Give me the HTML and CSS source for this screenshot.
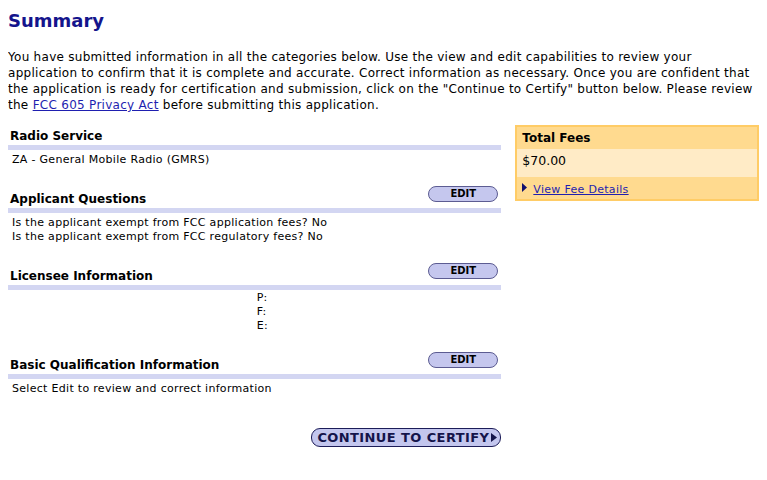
FILE: index.html
```html
<!DOCTYPE html>
<html>
<head>
<title>Summary</title>
<link rel="stylesheet" href="styles.css">
</head>
<body>

<h1 class="title">Summary</h1>

<p class="intro">
You have submitted information in all the categories below. Use the view and edit capabilities to review your<br>
application to confirm that it is complete and accurate. Correct information as necessary. Once you are confident that<br>
the application is ready for certification and submission, click on the "Continue to Certify" button below. Please review<br>
the <a href="#" class="link">FCC 605 Privacy Act</a> before submitting this application.
</p>

<div class="main">
	<div class="left">

		<div class="section first">
			<div class="sechead">
				<span class="sectitle">Radio Service</span>
			</div>
			<div class="secbody">ZA - General Mobile Radio (GMRS)</div>
		</div>

		<div class="section">
			<div class="sechead">
				<span class="sectitle">Applicant Questions</span>
				<a href="#" class="edit">EDIT</a>
			</div>
			<div class="secbody">
				Is the applicant exempt from FCC application fees? No<br>
				Is the applicant exempt from FCC regulatory fees? No
			</div>
		</div>

		<div class="section">
			<div class="sechead">
				<span class="sectitle">Licensee Information</span>
				<a href="#" class="edit">EDIT</a>
			</div>
			<div class="secbody licensee">
				<div class="lcol"></div>
				<div class="lcol">P:<br>F:<br>E:</div>
			</div>
		</div>

		<div class="section">
			<div class="sechead">
				<span class="sectitle">Basic Qualification Information</span>
				<a href="#" class="edit">EDIT</a>
			</div>
			<div class="secbody">Select Edit to review and correct information</div>
		</div>

		<div class="actions">
			<a href="#" class="certify">CONTINUE TO CERTIFY<svg class="tri" width="6" height="9" viewBox="0 0 6 9"><path d="M0 0 L6 4.5 L0 9 Z" fill="#14144a"/></svg></a>
		</div>

	</div>

	<div class="fees">
		<div class="feehead">Total Fees</div>
		<div class="feeamt">$70.00</div>
		<div class="feelink">
			<svg class="arrow" width="5" height="9" viewBox="0 0 5 9"><path d="M0 0 L5 4.5 L0 9 Z" fill="#10106e"/></svg>
			<a href="#" class="link">View Fee Details</a>
		</div>
	</div>
</div>

</body>
</html>
```

FILE: styles.css
```css
body { margin: 8px; font-family: "DejaVu Sans", Verdana, sans-serif; color: #000; background: #fff; }

.title { margin: 2px 0 0 0; font-size: 18px; line-height: 22px; color: #14148c; font-weight: bold; }

.intro { margin: 17px 0 0 0; font-size: 12px; line-height: 16px; letter-spacing: 0.28px; }
.link { color: #1f1fb0; text-decoration: underline; }

.main { display: flex; align-items: flex-start; gap: 14px; margin-top: 12px; }
.left { width: 494px; }

.section { margin-top: 19px; }
.section.first { margin-top: 3px; }
.sechead { display: flex; justify-content: space-between; align-items: flex-end; border-bottom: 5px solid #d3d6f2; }
.sectitle { font-size: 12px; line-height: 16px; font-weight: bold; padding: 0 0 1px 2px; }
.edit { display: block; width: 68px; height: 14px; margin: 0 3px 6px 0; border: 1px solid #5c5c92; border-radius: 8px; background: #c5c7ee; color: #000; font-size: 10px; line-height: 14px; font-weight: bold; text-align: center; text-decoration: none; }

.secbody { padding: 3px 0 0 4px; font-size: 11px; line-height: 14px; letter-spacing: 0.3px; }
.licensee { display: flex; padding-top: 1px; padding-left: 0; }
.lcol { width: 50%; padding-left: 2px; }

.actions { display: flex; justify-content: flex-end; margin-top: 32px; }
.certify { display: inline-flex; align-items: center; gap: 2px; height: 17px; padding: 0 3px 0 5px; border: 1px solid #1c1c58; border-radius: 9px; background: #c3c6ee; color: #14144a; font-size: 13px; font-weight: bold; line-height: 17px; letter-spacing: 0.4px; text-decoration: none; }
.tri { display: block; }

.fees { width: 240px; border: 2px solid #ffcc66; font-size: 12px; }
.feehead { background: #ffda8f; font-weight: bold; line-height: 16px; padding: 3px 5px; }
.feeamt { background: #ffebc6; font-size: 12.5px; line-height: 16px; padding: 4px 5px 8px 5px; }
.feelink { background: #ffda8f; font-size: 11px; line-height: 14px; padding: 6px 5px 2px 5px; display: flex; align-items: flex-start; gap: 6px; letter-spacing: 0.3px; }
.arrow { display: block; }
```
